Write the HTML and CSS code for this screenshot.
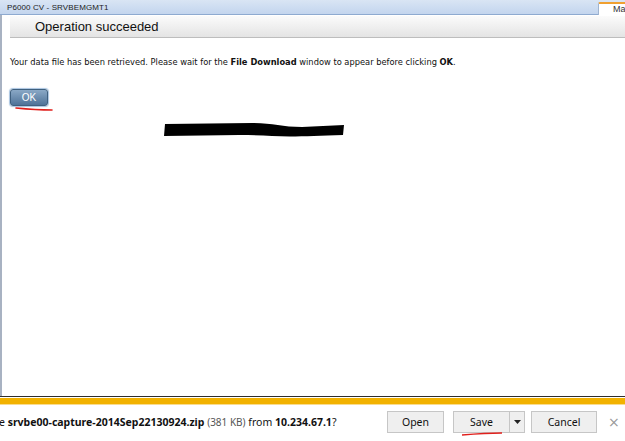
FILE: index.html
```html
<!DOCTYPE html>
<html>
<head>
<meta charset="utf-8">
<link rel="stylesheet" href="styles.css">
</head>
<body>
<div class="page">
  <div class="topbar">
    <span class="title">P6000 CV - SRVBEMGMT1</span>
    <span class="tab">Ma</span>
  </div>
  <div class="main">
    <div class="heading">Operation succeeded</div>
    <p class="msg">Your data file has been retrieved. Please wait for the <b>File Download</b> window to appear before clicking <b>OK</b>.</p>
    <div class="okwrap">
      <button class="ok">OK</button>
      <svg class="underline" width="40" height="6" viewBox="0 0 40 6"><path d="M2 2 C12 3, 24 4, 38 4" stroke="#e0201c" stroke-width="1.6" fill="none" stroke-linecap="round"/></svg>
    </div>
    <svg class="scribble" width="186" height="18" viewBox="0 0 186 18"><path d="M3 3 L90 2 C110 2, 120 6, 140 6 L182 4 L181 14 C150 15, 130 16, 110 15 C80 13, 40 15, 2 15 Z" fill="#000"/></svg>
  </div>
  <div class="dlbar">
    <div class="dltext">e <b>srvbe00-capture-2014Sep22130924.zip</b> <span class="size">(381 KB)</span> from <b>10.234.67.1</b>?</div>
    <div class="dlbtns">
      <button class="btn open">Open</button>
      <div class="split">
        <button class="btn save">Save
          <svg class="saveline" width="44" height="5" viewBox="0 0 44 5"><path d="M2 4 C14 3, 28 2, 42 2" stroke="#e0201c" stroke-width="1.4" fill="none"/></svg>
        </button>
        <button class="btn drop"><svg width="7" height="4" viewBox="0 0 7 4"><path d="M0 0 H7 L3.5 4 Z" fill="#222"/></svg></button>
      </div>
      <button class="btn cancel">Cancel</button>
      <span class="close">×</span>
    </div>
  </div>
</div>
</body>
</html>
```

FILE: styles.css
```css
* { box-sizing: border-box; }
html, body { margin: 0; padding: 0; }
body { width: 625px; height: 441px; overflow: hidden; background: #fff; font-family: "Liberation Sans", Arial, sans-serif; }
.page { display: flex; flex-direction: column; height: 441px; }

.topbar {
  height: 15px;
  display: flex;
  justify-content: space-between;
  align-items: flex-end;
  background: linear-gradient(#d9e5f4, #c3d5ee);
  border-bottom: 1px solid #8eaad0;
}
.title { font-size: 8px; letter-spacing: 0.1px; color: #222; padding-left: 7px; line-height: 13px; }
.tab {
  width: 27px; height: 13px;
  background: #fff;
  border-top: 2px solid #f0a030;
  border-left: 1px solid #9fb4d0;
  border-top-left-radius: 2px;
  font-size: 9px; line-height: 11px; color: #333;
  padding-left: 14px;
  margin-bottom: -1px;
  overflow: hidden;
}

.main {
  flex: 1;
  border-left: 2px solid #a8b2c2;
}
.heading {
  margin: 1px 0 0 8px;
  height: 22px;
  background: linear-gradient(#fbfbfb, #e4e4e4);
  border-bottom: 1px solid #bdbdbd;
  font-size: 13px;
  color: #111;
  padding-left: 25px;
  line-height: 22px;
}
.msg {
  margin: 19px 0 0 8px;
  font-family: "DejaVu Sans", Verdana, sans-serif;
  font-size: 8.3px;
  line-height: 10px;
  color: #111;
}
.okwrap { margin: 22px 0 0 8px; display: flex; flex-direction: column; }
.ok {
  width: 38px; height: 17px;
  border: 1px solid #3f607f;
  border-radius: 3px;
  background: linear-gradient(#8aa8c6, #4f7398);
  box-shadow: 0 0 1px 1px #a9c4e0;
  color: #fff;
  font-family: "Liberation Sans", Arial, sans-serif;
  font-size: 10px;
  padding: 0;
}
.underline { margin: 0 0 0 4px; }
.scribble { margin: 9px 0 0 160px; display: block; }

.dlbar {
  height: 45px;
  border-top: 1px solid #2e2e2e;
  display: flex;
  align-items: center;
  justify-content: space-between;
  background: #fff;
  position: relative;
  padding-top: 6px;
}
.dlbar::before {
  content: "";
  position: absolute; left: 0; right: 0; top: 1px;
  height: 6px;
  background: #f2b200;
  border-bottom: 1px solid #f8dc90;
}
.dltext {
  font-family: "Noto Sans", "Open Sans", sans-serif;
  font-size: 10.5px;
  color: #111;
  margin-left: -1px;
  white-space: nowrap;
}
.size { color: #555; font-size: 10px; }
.dlbtns { display: flex; align-items: center; }
.btn {
  height: 22px;
  border: 1px solid #c6c6c6;
  background: #efefef;
  font-family: "Noto Sans", "Open Sans", sans-serif;
  font-size: 10.5px;
  color: #111;
  padding: 0;
}
.open { width: 57px; margin-right: 9px; }
.split { display: flex; margin-right: 6px; }
.save { width: 57px; position: relative; }
.saveline { position: absolute; left: 6px; bottom: -4px; }
.drop { width: 15px; border-left: none; display: flex; align-items: center; justify-content: center; }
.cancel { width: 66px; }
.close { display: inline-block; width: 10px; text-align: center; color: #999; font-size: 14px; margin-left: 11px; margin-right: 7px; font-family: "DejaVu Sans", sans-serif; }
```
